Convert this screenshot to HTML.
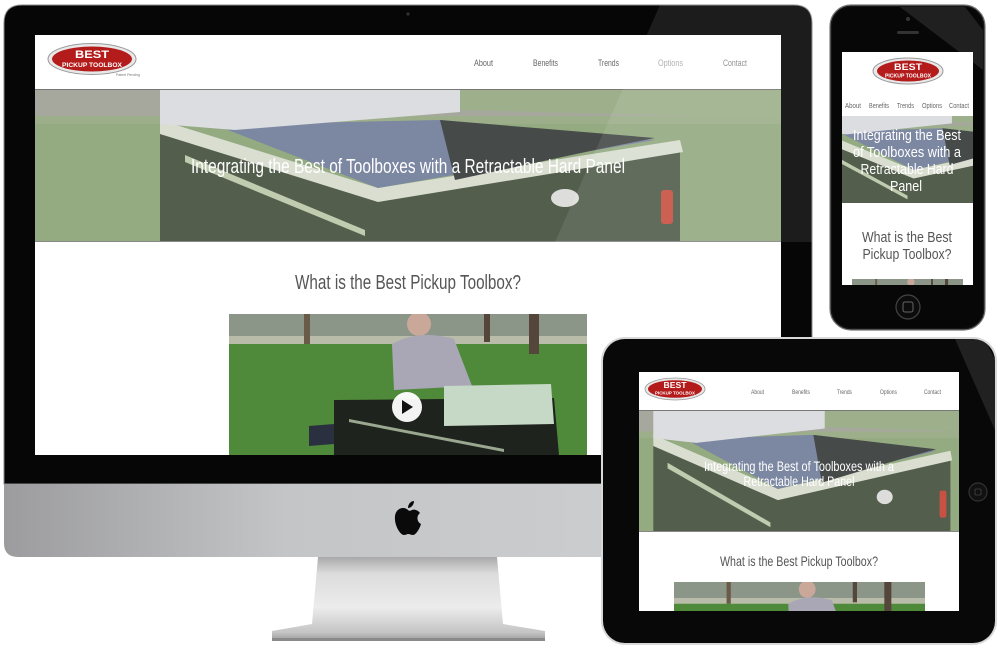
<!DOCTYPE html>
<html><head><meta charset="utf-8"><style>
html,body{margin:0;padding:0;background:#fff;width:1000px;height:650px;overflow:hidden}
svg{display:block}
text{font-family:"Liberation Sans",sans-serif}
</style></head><body>
<svg width="1000" height="650" viewBox="0 0 1000 650" xmlns="http://www.w3.org/2000/svg" style="position:absolute;left:0;top:0">
<defs>
<linearGradient id="chin" x1="0" x2="1" y1="0" y2="0">
<stop offset="0" stop-color="#9c9c9e"/><stop offset="0.35" stop-color="#c4c5c7"/><stop offset="1" stop-color="#d0d1d3"/>
</linearGradient>
<linearGradient id="stand" x1="0" x2="0" y1="0" y2="1">
<stop offset="0" stop-color="#a9a9ab"/><stop offset="0.2" stop-color="#dcdcdd"/><stop offset="0.6" stop-color="#ececec"/><stop offset="0.9" stop-color="#c4c4c4"/><stop offset="1" stop-color="#9a9a9a"/>
</linearGradient>
<symbol id="hero" viewBox="0 0 746 152" preserveAspectRatio="none">
<rect width="746" height="152" fill="#86a070"/>
<rect width="746" height="26" fill="#9a9c90"/>
<rect x="0" y="26" width="746" height="8" fill="#8fa47a"/>
<polygon points="425,0 746,0 746,28 425,20" fill="#90a67c"/>
<polygon points="125,40 343,108 645,58 645,152 125,152" fill="#3c4834"/>
<polygon points="125,30 343,98 645,50 648,62 343,112 125,44" fill="#d4dacb"/>
<polygon points="180,35 405,30 620,50 343,98" fill="#6a7796"/>
<polygon points="405,30 620,48 560,60 420,90" fill="#2d3331"/>
<polygon points="125,0 425,0 425,22 200,40 125,34" fill="#d6d9dc"/>
<polygon points="150,65 330,140 330,146 150,72" fill="#b8c4a4"/>
<rect x="626" y="100" width="12" height="34" rx="3" fill="#c03a2a"/>
<ellipse cx="530" cy="108" rx="14" ry="9" fill="#d9dad6"/>
<rect width="746" height="152" fill="#fff" opacity="0.12"/>
</symbol>
<symbol id="video" viewBox="0 0 358 141" preserveAspectRatio="none">
<rect width="358" height="141" fill="#4f8a3a"/>
<rect width="358" height="28" fill="#8b9588"/>
<rect y="22" width="358" height="8" fill="#b9bca8"/>
<rect x="75" y="0" width="6" height="30" fill="#6a5a48"/>
<rect x="300" y="0" width="10" height="40" fill="#54463a"/>
<rect x="255" y="0" width="6" height="28" fill="#54463a"/>
<ellipse cx="190" cy="10" rx="12" ry="12" fill="#c9a89a"/>
<path d="M163,30 Q190,15 225,25 L243,72 L165,76 Z" fill="#a9a7b6"/>
<polygon points="80,112 105,110 105,130 80,132" fill="#2a3040"/>
<polygon points="105,86 325,84 330,141 105,141" fill="#1f231d"/>
<polygon points="215,72 322,70 325,110 215,112" fill="#c6d9c6"/>
<polygon points="120,105 275,135 275,138 120,108" fill="#9aa890"/>
<circle cx="178" cy="93" r="15" fill="#fff" opacity="0.95"/>
<polygon points="173,86 173,100 184,93" fill="#111"/>
</symbol>
</defs>

<!-- iMac -->
<path d="M22,5 H794 Q812,5 812,23 V484 H4 V23 Q4,5 22,5 Z" fill="#060606" stroke="#888" stroke-width="1"/>
<path d="M4,484 H812 V543 Q812,557 798,557 H18 Q4,557 4,543 Z" fill="url(#chin)"/>
<circle cx="408" cy="14" r="1.6" fill="#333"/>
<polygon points="318,557 497,557 503,624 545,631 545,641 272,641 272,631 312,624" fill="url(#stand)"/>
<rect x="272" y="638" width="273" height="3" fill="#8a8a8a"/>
<path d="M408,510 C404,506 396,508 395,516 C394,525 400,535 404,535 C406,535 407,534 408,534 C410,534 411,535 413,535 C416,535 420,528 421,524 C417,522 416,516 420,513 C418,510 414,509 412,510 C410,511 409,511 408,510 Z M408,508 C408,504 411,501 414,501 C414,505 411,508 408,508 Z" fill="#0a0a0a"/>

<!-- iMac screen -->
<rect x="35" y="35" width="746" height="420" fill="#fff"/>
<rect x="35" y="89" width="746" height="1" fill="#777"/>
<svg x="35" y="90" width="746" height="152"><use href="#hero"/></svg>
<rect x="35" y="241" width="746" height="1" fill="#888"/>
<g transform="translate(92,59)">
<ellipse rx="44" ry="15.5" fill="#e8e8e8" stroke="#999" stroke-width="1"/>
<ellipse rx="40" ry="12.5" fill="#b41c1c"/>
<text x="0" y="-1" text-anchor="middle" font-size="11" font-weight="bold" fill="#fff" textLength="34" lengthAdjust="spacingAndGlyphs">BEST</text>
<text x="0" y="8" text-anchor="middle" font-size="6" font-weight="bold" fill="#fff" textLength="60" lengthAdjust="spacingAndGlyphs">PICKUP TOOLBOX</text>
<text x="24" y="17" font-size="3.5" fill="#777">Patent Pending</text>
</g>
<g font-size="9" fill="#666">
<text x="474" y="66" textLength="19" lengthAdjust="spacingAndGlyphs">About</text>
<text x="533" y="66" textLength="25" lengthAdjust="spacingAndGlyphs">Benefits</text>
<text x="598" y="66" textLength="21" lengthAdjust="spacingAndGlyphs">Trends</text>
<text x="658" y="66" textLength="25" lengthAdjust="spacingAndGlyphs" fill="#aaa">Options</text>
<text x="723" y="66" textLength="24" lengthAdjust="spacingAndGlyphs" fill="#888">Contact</text>
</g>
<text x="191" y="173" font-size="20" fill="#fff" textLength="434" lengthAdjust="spacingAndGlyphs">Integrating the Best of Toolboxes with a Retractable Hard Panel</text>
<text x="295" y="289" font-size="20" fill="#555" textLength="226" lengthAdjust="spacingAndGlyphs">What is the Best Pickup Toolbox?</text>
<svg x="229" y="314" width="358" height="141"><use href="#video"/></svg>
<polygon points="660,5 812,5 812,242 555,242" fill="#fff" opacity="0.09"/>

<!-- Phone -->
<rect x="830" y="5" width="155" height="325" rx="21" fill="#151515" stroke="#777" stroke-width="1.2"/>
<rect x="832" y="7" width="151" height="321" rx="19" fill="#070707"/>
<polygon points="900,7 965,7 983,30 983,70" fill="#fff" opacity="0.1"/>
<circle cx="908" cy="19" r="2" fill="#333"/>
<rect x="897" y="31" width="22" height="3" rx="1.5" fill="#333"/>
<circle cx="908" cy="307" r="12" fill="#0c0c0c" stroke="#444" stroke-width="1.2"/>
<rect x="903" y="302" width="10" height="10" rx="2" fill="none" stroke="#666" stroke-width="1"/>
<rect x="842" y="52" width="131" height="233" fill="#fff"/>
<g transform="translate(908,71)">
<ellipse rx="35" ry="13" fill="#e8e8e8" stroke="#999" stroke-width="1"/>
<ellipse rx="31" ry="10.5" fill="#b41c1c"/>
<text x="0" y="-1" text-anchor="middle" font-size="9" font-weight="bold" fill="#fff" textLength="28" lengthAdjust="spacingAndGlyphs">BEST</text>
<text x="0" y="6.5" text-anchor="middle" font-size="5" font-weight="bold" fill="#fff" textLength="46" lengthAdjust="spacingAndGlyphs">PICKUP TOOLBOX</text>
</g>
<g font-size="7" fill="#666">
<text x="845" y="108" textLength="16" lengthAdjust="spacingAndGlyphs">About</text>
<text x="869" y="108" textLength="20" lengthAdjust="spacingAndGlyphs">Benefits</text>
<text x="897" y="108" textLength="17" lengthAdjust="spacingAndGlyphs">Trends</text>
<text x="922" y="108" textLength="20" lengthAdjust="spacingAndGlyphs">Options</text>
<text x="949" y="108" textLength="20" lengthAdjust="spacingAndGlyphs">Contact</text>
</g>
<svg x="842" y="116" width="131" height="87" viewBox="190 10 280 142" preserveAspectRatio="none"><use href="#hero" width="746" height="152"/></svg>
<g font-size="15" fill="#fff" text-anchor="middle">
<text x="907" y="140" textLength="108" lengthAdjust="spacingAndGlyphs">Integrating the Best</text>
<text x="907" y="157" textLength="108" lengthAdjust="spacingAndGlyphs">of Toolboxes with a</text>
<text x="907" y="174" textLength="93" lengthAdjust="spacingAndGlyphs">Retractable Hard</text>
<text x="906" y="191" textLength="32" lengthAdjust="spacingAndGlyphs">Panel</text>
</g>
<g font-size="15" fill="#555" text-anchor="middle">
<text x="907" y="242" textLength="90" lengthAdjust="spacingAndGlyphs">What is the Best</text>
<text x="907" y="259" textLength="89" lengthAdjust="spacingAndGlyphs">Pickup Toolbox?</text>
</g>
<svg x="852" y="279" width="111" height="6" viewBox="0 0 358 20" preserveAspectRatio="none"><use href="#video" width="358" height="141"/></svg>

<!-- Tablet -->
<rect x="601" y="337" width="396" height="308" rx="24" fill="#d8d8d8"/>
<rect x="603" y="339" width="392" height="304" rx="22" fill="#080808"/>
<polygon points="955,339 985,339 995,360 995,430" fill="#fff" opacity="0.1"/>
<circle cx="978" cy="492" r="9" fill="#111" stroke="#333" stroke-width="1.2"/>
<rect x="975" y="489" width="6" height="6" rx="1" fill="none" stroke="#444" stroke-width="0.8"/>
<rect x="639" y="372" width="320" height="239" fill="#fff"/>
<g transform="translate(675,389)">
<ellipse rx="30" ry="11" fill="#e8e8e8" stroke="#999" stroke-width="0.8"/>
<ellipse rx="27" ry="8.8" fill="#b41c1c"/>
<text x="0" y="-1" text-anchor="middle" font-size="8" font-weight="bold" fill="#fff" textLength="23" lengthAdjust="spacingAndGlyphs">BEST</text>
<text x="0" y="5.5" text-anchor="middle" font-size="4.2" font-weight="bold" fill="#fff" textLength="40" lengthAdjust="spacingAndGlyphs">PICKUP TOOLBOX</text>
</g>
<g font-size="6" fill="#666">
<text x="751" y="394" textLength="13" lengthAdjust="spacingAndGlyphs">About</text>
<text x="792" y="394" textLength="18" lengthAdjust="spacingAndGlyphs">Benefits</text>
<text x="837" y="394" textLength="15" lengthAdjust="spacingAndGlyphs">Trends</text>
<text x="880" y="394" textLength="17" lengthAdjust="spacingAndGlyphs">Options</text>
<text x="924" y="394" textLength="17" lengthAdjust="spacingAndGlyphs">Contact</text>
</g>
<rect x="639" y="410" width="320" height="1" fill="#777"/>
<svg x="639" y="411" width="320" height="121" viewBox="100 0 560 152" preserveAspectRatio="none"><use href="#hero" width="746" height="152"/></svg>
<g font-size="14" fill="#fff" text-anchor="middle">
<text x="799" y="471" textLength="190" lengthAdjust="spacingAndGlyphs">Integrating the Best of Toolboxes with a</text>
<text x="799" y="486" textLength="111" lengthAdjust="spacingAndGlyphs">Retractable Hard Panel</text>
</g>
<rect x="639" y="531" width="320" height="1" fill="#888"/>
<text x="799" y="566" font-size="14" fill="#555" text-anchor="middle" textLength="158" lengthAdjust="spacingAndGlyphs">What is the Best Pickup Toolbox?</text>
<svg x="674" y="582" width="251" height="29" viewBox="0 0 358 40" preserveAspectRatio="none"><use href="#video" width="358" height="141"/></svg>
</svg>
</body></html>
